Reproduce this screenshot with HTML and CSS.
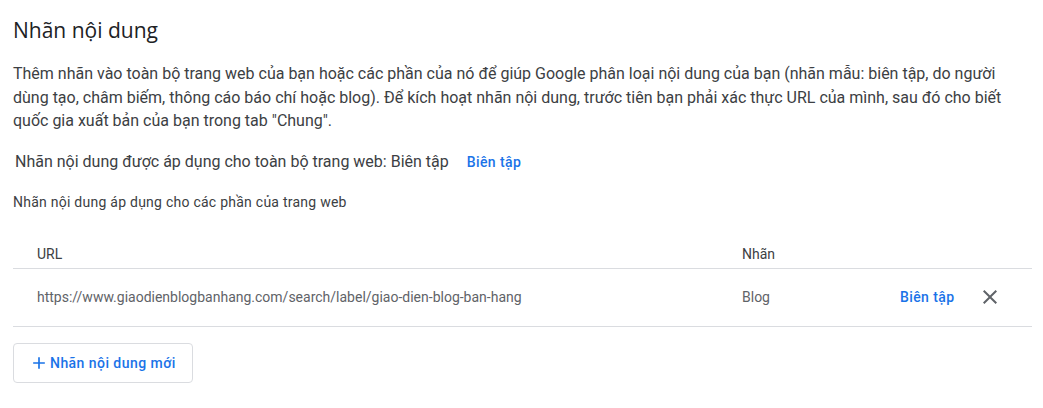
FILE: index.html
```html
<!DOCTYPE html>
<html lang="vi">
<head>
<meta charset="utf-8">
<link rel="stylesheet" href="styles.css">
</head>
<body>
<div class="page">
  <h1 class="title">Nhãn nội dung</h1>
  <p class="desc">Thêm nhãn vào toàn bộ trang web của bạn hoặc các phần của nó để giúp Google phân loại nội dung của bạn (nhãn mẫu: biên tập, do người dùng tạo, châm biếm, thông cáo báo chí hoặc blog). Để kích hoạt nhãn nội dung, trước tiên bạn phải xác thực URL của mình, sau đó cho biết quốc gia xuất bản của bạn trong tab "Chung".</p>
  <div class="site-label">
    <span class="site-text">Nhãn nội dung được áp dụng cho toàn bộ trang web: Biên tập</span>
    <a class="link">Biên tập</a>
  </div>
  <div class="subhead">Nhãn nội dung áp dụng cho các phần của trang web</div>
  <div class="table">
    <div class="row head">
      <div class="c-url">URL</div>
      <div class="c-label">Nhãn</div>
      <div class="c-act"></div>
    </div>
    <div class="row body">
      <div class="c-url">https://www.giaodienblogbanhang.com/search/label/giao-dien-blog-ban-hang</div>
      <div class="c-label">Blog</div>
      <div class="c-act">
        <a class="link">Biên tập</a>
        <svg class="close" width="24" height="24" viewBox="0 0 24 24"><path d="M19 6.41 17.59 5 12 10.59 6.41 5 5 6.41 10.59 12 5 17.59 6.41 19 12 13.41 17.59 19 19 17.59 13.41 12z" fill="#5f6368"/></svg>
      </div>
    </div>
  </div>
  <button class="add-btn">
    <svg width="20" height="20" viewBox="0 0 24 24"><path d="M19 13h-6v6h-2v-6H5v-2h6V5h2v6h6v2z" fill="#1a73e8"/></svg>
    <span>Nhãn nội dung mới</span>
  </button>
</div>
</body>
</html>
```

FILE: styles.css
```css
html, body {
  margin: 0;
  padding: 0;
  background: #ffffff;
}
body {
  font-family: Roboto, "Noto Sans", Arial, sans-serif;
  color: #3c4043;
}
.page {
  padding: 15px 10px 0 13px;
}
.title {
  margin: 0;
  font-family: "Open Sans", Roboto, sans-serif;
  font-size: 21px;
  font-weight: 400;
  line-height: 30px;
  color: #202124;
}
.desc {
  margin: 17px 0 0;
  font-size: 16px;
  line-height: 23.5px;
  color: #3c4043;
  max-width: 1010px;
}
.site-label {
  display: flex;
  align-items: center;
  gap: 18px;
  margin-top: 15px;
  padding-left: 2px;
  height: 28px;
}
.site-text {
  font-size: 16px;
  color: #3c4043;
}
.link {
  color: #1a73e8;
  font-size: 14px;
  font-weight: 500;
  letter-spacing: 0.4px;
  cursor: pointer;
}
.subhead {
  margin-top: 16px;
  font-size: 14px;
  line-height: 20px;
  letter-spacing: 0.25px;
  color: #3c4043;
}
.table {
  margin-top: 30px;
  width: 1019px;
}
.row {
  display: flex;
  align-items: center;
  border-bottom: 1px solid #dadce0;
  font-size: 14px;
}
.row.head {
  height: 25px;
  padding-bottom: 1px;
  color: #3c4043;
}
.row.body {
  height: 57px;
  color: #5f6368;
}
.c-url {
  padding-left: 24px;
  width: 705px;
}
.c-label {
  width: 158px;
}
.c-act {
  flex: 1;
  display: flex;
  align-items: center;
  gap: 24px;
}
.close {
  display: block;
  width: 24px;
  height: 24px;
}
.add-btn {
  margin-top: 16px;
  display: flex;
  align-items: center;
  gap: 1px;
  height: 40px;
  width: 180px;
  padding: 0 0 0 15px;
  border: 1px solid #dadce0;
  border-radius: 4px;
  background: #fff;
  font-family: Roboto, "Noto Sans", Arial, sans-serif;
  font-size: 14px;
  font-weight: 500;
  letter-spacing: 0.45px;
  color: #1a73e8;
}
.add-btn svg {
  display: block;
}
```
